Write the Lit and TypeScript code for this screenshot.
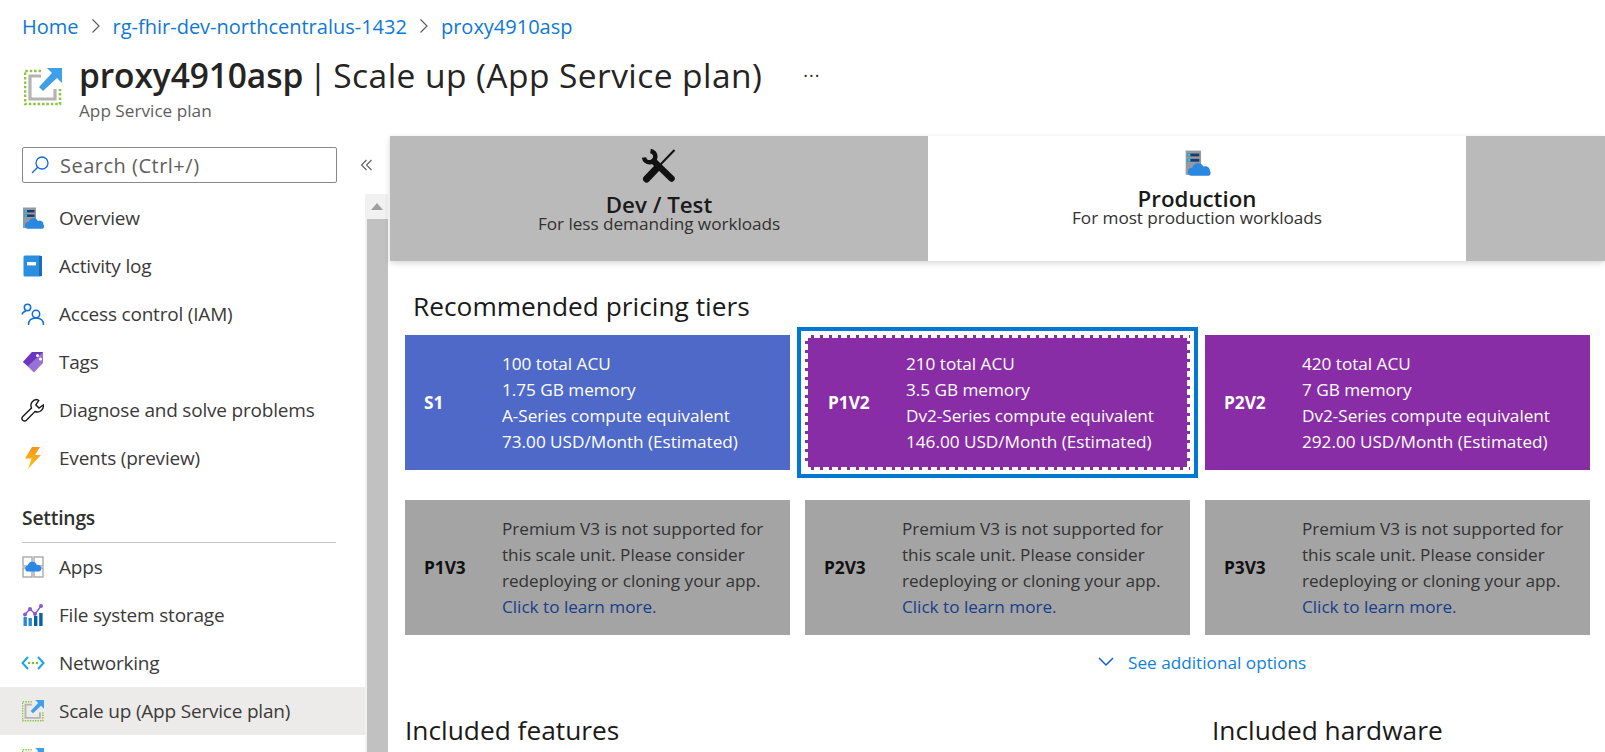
import { LitElement, html, css, svg } from "lit";
import { customElement } from "lit/decorators.js";

const serverCloud = svg`<rect x="1" y="0.500" width="13" height="20.500" fill="#949a9f"/><rect x="2.500" y="3" width="10" height="2.400" fill="#1b3a6b"/><rect x="2.500" y="7.500" width="10" height="2.400" fill="#1b3a6b"/><rect x="2.500" y="3" width="2.500" height="2.400" fill="#35c0f0"/><rect x="2.500" y="7.500" width="2.500" height="2.400" fill="#35c0f0"/><path d="M6 21.800a3.400 3.400 0 0 1 .6-6.800 5 5 0 0 1 9.400-1 3.900 3.900 0 0 1 5.500 3.800 2.500 2.500 0 0 1-1 4z" fill="#2b88e0"/>`;
const scaleIcon = svg`
  <path d="M17 3H1v33h35V21" fill="none" stroke="#8cc63f" stroke-width="2.600" stroke-dasharray="2.500 1.900"/>
  <path d="M17 8H6v23h25V21" fill="none" stroke="#b4b4b4" stroke-width="3.200"/>
  <path d="M23 0h15v15l-5-5-14 13-4-4L28 5z" fill="#3f9fe8"/>`;
const crumbChevron = html`<svg width="10" height="16" viewBox="0 0 10 16"><path d="M1.500 1.500L8 8l-6.500 6.500" fill="none" stroke="#605e5c" stroke-width="1.200"/></svg>`;

const icons: Record<string, unknown> = {
  overview: html`<svg width="22" height="22" viewBox="0 0 22 22">${serverCloud}</svg>`,
  log: html`<svg width="20" height="22" viewBox="0 0 20 22"><rect x="0.500" y="0.500" width="18" height="21" rx="1.500" fill="#2b8fe0"/><rect x="16" y="1" width="3" height="20" fill="#1a6db5"/><rect x="4" y="7" width="9" height="3.400" fill="#fff"/></svg>`,
  iam: html`<svg width="24" height="23" viewBox="0 0 24 23" fill="none" stroke="#0f6fd6" stroke-width="1.500"><circle cx="6.500" cy="4.500" r="3.200"/><circle cx="15" cy="11" r="3.700"/><path d="M1 11.500c.6-1.800 1.900-3 4-3.200"/><path d="M7.500 22c0-4.500 3-7 7.500-7s7.500 2.500 7.500 7"/></svg>`,
  tag: html`<svg width="22" height="22" viewBox="0 0 22 22"><path d="M10 1h11v11l-9 9.500L1 11z" fill="#9a72d6"/><path d="M10 1h11L6 15 1 11z" fill="#6d34c0"/><circle cx="15.500" cy="4.500" r="1.500" fill="#fff"/><circle cx="18.500" cy="8" r="1.500" fill="#fff"/></svg>`,
  wrench: html`<svg width="24" height="24" viewBox="0 0 24 24" fill="none" stroke="#1a1a1a" stroke-width="1.400"><path d="M15.500 1.500a6 6 0 0 0-5 8.500L1.800 18.600a2.500 2.500 0 0 0 3.600 3.600L14 13.500a6 6 0 0 0 8.300-6.500l-4.300 3-3.200-3.200 3-4.300a6 6 0 0 0-2.300-1z"/></svg>`,
  bolt: html`<svg width="16" height="22" viewBox="0 0 16 22"><defs><linearGradient id="bolt" x1="0" y1="0" x2="0" y2="1"><stop offset="0" stop-color="#f7931e"/><stop offset="1" stop-color="#fcc419"/></linearGradient></defs><path d="M7 0h8l-5 8h6L3 22l3.500-10.500H0z" fill="url(#bolt)"/></svg>`,
  apps: html`<svg width="22" height="22" viewBox="0 0 22 22"><g fill="none" stroke="#a8a8a8" stroke-width="1.400"><rect x="1" y="1" width="9" height="9"/><rect x="12" y="1" width="9" height="9"/><rect x="1" y="12" width="9" height="9"/><rect x="12" y="12" width="9" height="9"/></g><path d="M5.500 15.500a3 3 0 0 1 .3-5.900 4.700 4.700 0 0 1 9-.7 3.300 3.300 0 0 1 2 6.600z" fill="#2b88e8"/></svg>`,
  storage: html`<svg width="20" height="22" viewBox="0 0 20 22"><rect x="0.500" y="13" width="3.400" height="9" fill="#2b88d8"/><rect x="5.500" y="14" width="3.400" height="8" fill="#2b88d8"/><rect x="11" y="12" width="3.400" height="10" fill="#0b5fa8"/><rect x="16.200" y="9" width="3.400" height="13" fill="#0b5fa8"/><path d="M2 10.500l5-5.500 5 5 6-8" fill="none" stroke="#8a55d6" stroke-width="1.400"/><circle cx="2" cy="10.500" r="2" fill="#8a55d6"/><circle cx="7" cy="5" r="2" fill="#8a55d6"/><circle cx="12" cy="10" r="2" fill="#8a55d6"/><circle cx="18" cy="2" r="2" fill="#8a55d6"/></svg>`,
  network: html`<svg width="24" height="14" viewBox="0 0 24 14"><path d="M7 1L1.500 7 7 13" fill="none" stroke="#19a5ec" stroke-width="2"/><path d="M17 1l5.500 6L17 13" fill="none" stroke="#19a5ec" stroke-width="2"/><circle cx="8" cy="7" r="1.300" fill="#7fba3a"/><circle cx="12" cy="7" r="1.300" fill="#7fba3a"/><circle cx="16" cy="7" r="1.300" fill="#7fba3a"/></svg>`,
  scale: html`<svg width="22" height="22" viewBox="0 0 38 38">${scaleIcon}</svg>`,
};

const general = [
  ["overview", "Overview"],
  ["log", "Activity log"],
  ["iam", "Access control (IAM)"],
  ["tag", "Tags"],
  ["wrench", "Diagnose and solve problems"],
  ["bolt", "Events (preview)"],
];
const settings = [
  ["apps", "Apps", false],
  ["storage", "File system storage", false],
  ["network", "Networking", false],
  ["scale", "Scale up (App Service plan)", true],
  ["scale", "", false],
];

const recommended = [
  { id: "S1", cls: "blue", lines: ["100 total ACU", "1.75 GB memory", "A-Series compute equivalent", "73.00 USD/Month (Estimated)"] },
  { id: "P1V2", cls: "purple selected", lines: ["210 total ACU", "3.5 GB memory", "Dv2-Series compute equivalent", "146.00 USD/Month (Estimated)"] },
  { id: "P2V2", cls: "purple", lines: ["420 total ACU", "7 GB memory", "Dv2-Series compute equivalent", "292.00 USD/Month (Estimated)"] },
];

@customElement("app-root")
export class AppRoot extends LitElement {
  static styles = css`
    :host {
      display: block;
      width: 1605px;
      height: 752px;
      overflow: hidden;
      background: #fff;
      font-family: "Open Sans", "Noto Sans", sans-serif;
      color: #323130;
    }
    a { text-decoration: none; }
    .crumbs {
      display: flex;
      align-items: center;
      height: 26px;
      padding: 13px 0 0 22px;
      font-size: 20px;
    }
    .crumbs a { color: #0f78d4; }
    .crumbs svg { margin: 0 12px; }
    .title {
      display: flex;
      height: 73px;
      padding: 15px 0 0 24px;
    }
    .title-icon { margin-top: 14px; }
    .title-text { margin-left: 17px; }
    h1 {
      margin: 0;
      font-size: 33.500px;
      font-weight: 400;
      line-height: 42px;
      letter-spacing: 0.44px;
      color: #252423;
      white-space: nowrap;
      display: flex;
    }
    h1 b { font-weight: 600; letter-spacing: -0.1px; }
    h1 .sep { word-spacing: -3.500px; }
    h1 .dots { margin-left: 41px; font-size: 18px; line-height: 42px; letter-spacing: 1px; }
    .sub { font-size: 17.200px; line-height: 20px; margin-top: 5px; color: #605e5c; }
    .body { display: flex; height: 626px; padding-top: 10px; box-sizing: border-box; margin-top: -1px; }
    .side { width: 390px; flex: none; display: flex; flex-direction: column; }
    .search-row { display: flex; align-items: center; padding-left: 22px; height: 36px; margin-top: 11px; }
    .search {
      width: 315px;
      height: 36px;
      box-sizing: border-box;
      border: 1px solid #8a8886;
      border-radius: 2px;
      display: flex;
      align-items: center;
      padding-left: 8px;
      gap: 11px;
      font-size: 20px;
      color: #605e5c;
      letter-spacing: 0.5px;
    }
    .collapse { margin-left: 23px; color: #605e5c; display: flex; }
    .side-main { display: flex; flex: 1; margin-top: 11px; min-height: 0; }
    .nav { width: 365px; flex: none; }
    .item {
      display: flex;
      align-items: center;
      height: 48px;
      font-size: 19px;
      letter-spacing: -0.2px;
      color: #3b3a39;
      white-space: nowrap;
    }
    .item.on { background: #edebe9; }
    .ic {
      width: 59px;
      padding: 0 14px 0 21px;
      box-sizing: border-box;
      flex: none;
      display: flex;
      align-items: center;
      justify-content: center;
    }
    .group {
      margin: 14px 0 0 22px;
      width: 314px;
      height: 47px;
      box-sizing: border-box;
      border-bottom: 1px solid #c8c6c4;
      font-size: 19.300px;
      font-weight: 600;
      letter-spacing: -0.2px;
      line-height: 44px;
      color: #323130;
    }
    .scroll { width: 23px; background: #f1f1f1; display: flex; flex-direction: column; }
    .scroll .arrow { height: 25px; display: flex; align-items: center; justify-content: center; }
    .scroll .thumb { flex: 1; margin-left: 2px; background: #c1c1c1; }
    .main { flex: 1; min-width: 0; }
    .tabs { display: flex; height: 125px; box-shadow: 0 2px 6px rgba(0, 0, 0, 0.16); }
    .tab {
      width: 538px;
      flex: none;
      background: #fff;
      display: flex;
      flex-direction: column;
      align-items: center;
      box-sizing: border-box;
      padding-top: 12px;
    }
    .tab.off { background: #bababa; }
    .tab.rest { flex: 1; width: auto; }
    .tab .glyph { height: 44px; display: flex; align-items: flex-start; justify-content: center; }
    .tab b { font-size: 22.300px; font-weight: 600; line-height: 24px; color: #1a1a1a; margin: 1px 0 -1px; }
    .tab span.desc { font-size: 17.200px; line-height: 16px; letter-spacing: -0.05px; color: #323130; }
    .tab.prod { padding-top: 14px; }
    .tab.prod .glyph { height: 36px; }
    h2 {
      margin: 0;
      font-size: 26.300px;
      font-weight: 400;
      line-height: 40px;
      color: #1a1a1a;
      white-space: nowrap;
    }
    .rec { padding: 25px 0 0 23px; height: 50px; box-sizing: border-box; }
    .grid {
      display: grid;
      grid-template-columns: repeat(3, 385px);
      column-gap: 15px;
      padding-left: 15px;
    }
    .grid.a { height: 165px; margin-top: 24px; }
    .grid.b { height: 135px; }
    .card {
      height: 135px;
      display: flex;
      align-items: center;
      padding-top: 1px;
      font-size: 17.200px;
      line-height: 25.800px;
      letter-spacing: -0.03px;
      box-sizing: border-box;
      white-space: nowrap;
    }
    .card .id { width: 97px; padding-left: 19px; box-sizing: border-box; flex: none; font-weight: 700; font-size: 17.300px; }
    .blue { background: #4f69c8; color: #fff; }
    .purple { background: #882da6; color: #fff; }
    .selected { position: relative; }
    .selected::before {
      content: "";
      position: absolute;
      inset: -8px;
      border: 4px solid #0078d4;
    }
    .selected::after {
      content: "";
      position: absolute;
      inset: 0;
      background:
        repeating-linear-gradient(90deg, #fff 0 6px, #882da6 6px 9px) left top / 100% 3px no-repeat,
        repeating-linear-gradient(90deg, #fff 0 6px, #882da6 6px 9px) left bottom / 100% 3px no-repeat,
        repeating-linear-gradient(180deg, #fff 0 6px, #882da6 6px 9px) left top / 3px 100% no-repeat,
        repeating-linear-gradient(180deg, #fff 0 6px, #882da6 6px 9px) right top / 3px 100% no-repeat;
    }
    .selected .id { padding-left: 23px; width: 101px; }
    .gray { background: #a4a4a4; color: #333; }
    .gray .id { color: #111; }
    .gray a { color: #173f8a; }
    .more {
      display: flex;
      align-items: center;
      gap: 14px;
      height: 54px;
      padding-left: 708px;
      font-size: 17.200px;
      color: #0f7fe0;
    }
    .incl {
      display: grid;
      grid-template-columns: 807px 1fr;
      padding: 21px 0 0 15px;
    }
  `;

  render() {
    return html`
      <div class="crumbs">
        <a>Home</a>
        ${crumbChevron}
        <a>rg-fhir-dev-northcentralus-1432</a>
        ${crumbChevron}
        <a>proxy4910asp</a>
      </div>
      <div class="title">
        <svg class="title-icon" width="38" height="38" viewBox="0 0 38 38">${scaleIcon}</svg>
        <div class="title-text">
          <h1><span><b>proxy4910asp</b><span class="sep"> | </span>Scale up (App Service plan)</span><span class="dots">···</span></h1>
          <div class="sub">App Service plan</div>
        </div>
      </div>
      <div class="body">
        <div class="side">
          <div class="search-row">
            <div class="search">
              <svg width="18" height="18" viewBox="0 0 18 18" fill="none" stroke="#0f6cd6" stroke-width="1.300"><circle cx="11" cy="7" r="6"/><path d="M6.700 11.300L1 17"/></svg>
              Search (Ctrl+/)
            </div>
            <span class="collapse"><svg width="13" height="12" viewBox="0 0 13 12" fill="none" stroke="#605e5c" stroke-width="1.100"><path d="M6.500 1L1.500 6l5 5"/><path d="M11.500 1l-5 5 5 5"/></svg></span>
          </div>
          <div class="side-main">
            <div class="nav">
              ${general.map(([i, t]) => html`<div class="item"><span class="ic">${icons[i as string]}</span>${t}</div>`)}
              <div class="group">Settings</div>
              ${settings.map(([i, t, on]) => html`<div class="item ${on ? "on" : ""}"><span class="ic">${icons[i as string]}</span>${t}</div>`)}
            </div>
            <div class="scroll">
              <div class="arrow"><svg width="12" height="7" viewBox="0 0 12 7"><path d="M6 0l6 7H0z" fill="#a0a0a0"/></svg></div>
              <div class="thumb"></div>
            </div>
          </div>
        </div>
        <div class="main">
          <div class="tabs">
            <div class="tab off">
              <span class="glyph"><svg width="36" height="36" viewBox="0 0 36 36" fill="none" stroke="#111">
                <path d="M33.500 2L18.500 17.500" stroke-width="2"/>
                <path d="M15 21L5.500 31" stroke-width="7" stroke-linecap="round"/>
                <path d="M3 9.500A5.700 5.700 0 1 0 9.500 3" stroke-width="4.500"/>
                <path d="M13 13.500L30.500 30.500" stroke-width="6.500" stroke-linecap="round"/>
              </svg></span>
              <b>Dev / Test</b>
              <span class="desc">For less demanding workloads</span>
            </div>
            <div class="tab prod">
              <span class="glyph"><svg width="27" height="26" viewBox="0 0 22 22">${serverCloud}</svg></span>
              <b>Production</b>
              <span class="desc">For most production workloads</span>
            </div>
            <div class="tab off rest"></div>
          </div>
          <div class="rec"><h2>Recommended pricing tiers</h2></div>
          <div class="grid a">
            ${recommended.map(
              (c) => html`<div class="card ${c.cls}">
                <div class="id">${c.id}</div>
                <div>${c.lines.map((l) => html`<div>${l}</div>`)}</div>
              </div>`
            )}
          </div>
          <div class="grid b">
            ${["P1V3", "P2V3", "P3V3"].map(
              (id) => html`<div class="card gray">
                <div class="id">${id}</div>
                <div>
                  <div>Premium V3 is not supported for</div>
                  <div>this scale unit. Please consider</div>
                  <div>redeploying or cloning your app.</div>
                  <a>Click to learn more.</a>
                </div>
              </div>`
            )}
          </div>
          <div class="more">
            <svg width="16" height="10" viewBox="0 0 16 10"><path d="M1 1l7 7 7-7" fill="none" stroke="#0f5fcf" stroke-width="1.500"/></svg>
            See additional options
          </div>
          <div class="incl">
            <h2>Included features</h2>
            <h2>Included hardware</h2>
          </div>
        </div>
      </div>
    `;
  }
}
